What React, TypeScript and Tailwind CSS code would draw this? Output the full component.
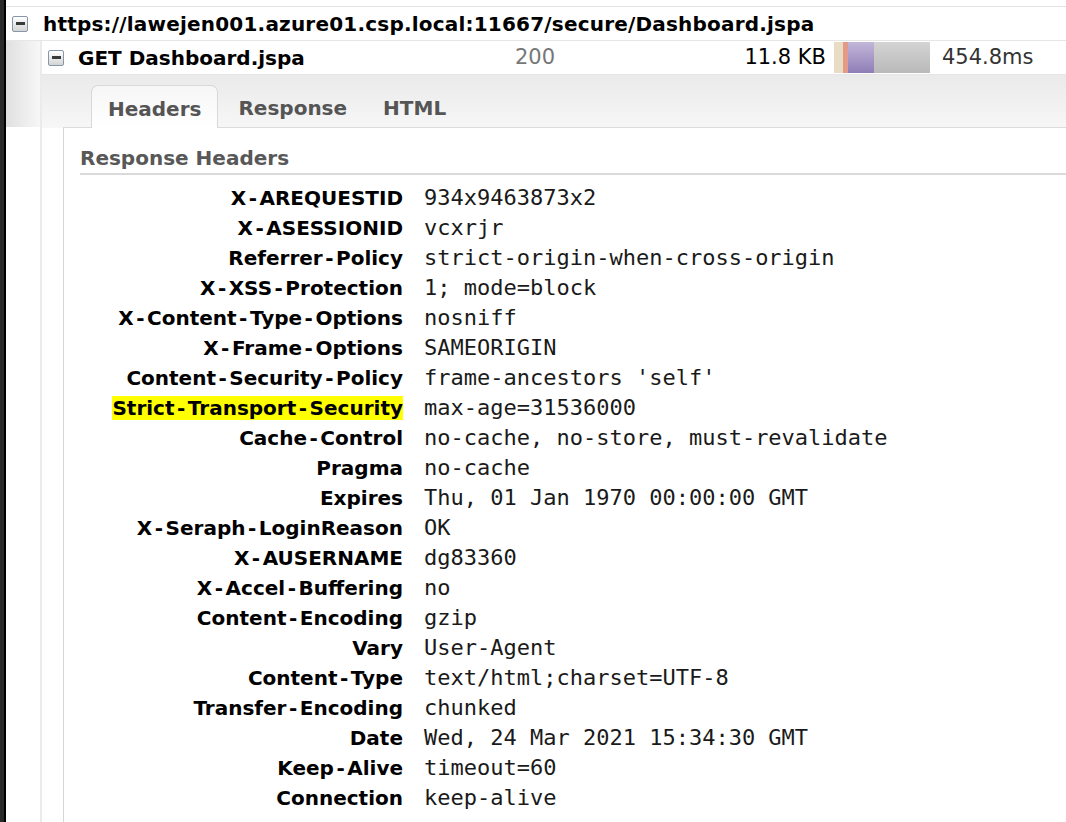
import React from "react";

const headers: [string, string][] = [
  ["X-AREQUESTID", "934x9463873x2"],
  ["X-ASESSIONID", "vcxrjr"],
  ["Referrer-Policy", "strict-origin-when-cross-origin"],
  ["X-XSS-Protection", "1; mode=block"],
  ["X-Content-Type-Options", "nosniff"],
  ["X-Frame-Options", "SAMEORIGIN"],
  ["Content-Security-Policy", "frame-ancestors 'self'"],
  ["Strict-Transport-Security", "max-age=31536000"],
  ["Cache-Control", "no-cache, no-store, must-revalidate"],
  ["Pragma", "no-cache"],
  ["Expires", "Thu, 01 Jan 1970 00:00:00 GMT"],
  ["X-Seraph-LoginReason", "OK"],
  ["X-AUSERNAME", "dg83360"],
  ["X-Accel-Buffering", "no"],
  ["Content-Encoding", "gzip"],
  ["Vary", "User-Agent"],
  ["Content-Type", "text/html;charset=UTF-8"],
  ["Transfer-Encoding", "chunked"],
  ["Date", "Wed, 24 Mar 2021 15:34:30 GMT"],
  ["Keep-Alive", "timeout=60"],
  ["Connection", "keep-alive"],
];

function Toggle() {
  return (
    <span className="flex h-[16px] w-[16px] shrink-0 items-center justify-center rounded-[2px] border border-[#8796a8] bg-linear-to-b from-white to-[#d4d4d4]">
      <span className="h-[3px] w-[9px] bg-[#3a3a3a]" />
    </span>
  );
}

// the original font draws a wider hyphen
function Label({ text }: { text: string }) {
  const parts = text.split("-");
  return (
    <>
      {parts.map((p, i) => (
        <React.Fragment key={i}>
          {i > 0 && <span className="mx-[2.5px]">-</span>}
          {p}
        </React.Fragment>
      ))}
    </>
  );
}

export default function App() {
  return (
    <div className="flex min-h-screen bg-white font-['DejaVu_Sans',sans-serif] text-black">
      {/* dark window edge */}
      <div className="w-[6px] shrink-0 border-r-2 border-black bg-[#2a2a2a]" />

      <div className="flex flex-1 flex-col">
        <div className="h-[7px] border-b border-[#e3e3e3]" />

        {/* request url */}
        <div className="flex h-[34px] items-center border-b border-[#e6e6e6] pl-[6px]">
          <Toggle />
          <span className="ml-[15px] text-[20px] font-bold leading-none tracking-[0.2px]">
            https://lawejen001.azure01.csp.local:11667/secure/Dashboard.jspa
          </span>
        </div>

        <div className="flex flex-1">
          {/* left gutter */}
          <div className="flex w-[36px] shrink-0 flex-col border-r-2 border-[#ebebeb]">
            <div className="h-[86px] bg-linear-to-r from-[#e0e0e0] to-[#f7f7f7]" />
          </div>

          <div className="flex flex-1 flex-col">
            {/* request row */}
            <div className="flex h-[34px] items-center border-b border-[#e6e6e6] pl-[6px]">
              <Toggle />
              <span className="ml-[14px] w-[437px] text-[20px] font-bold leading-none">GET Dashboard.jspa</span>
              <span className="w-[90px] text-[21px] leading-none text-[#777]">200</span>
              <span className="w-[221px] text-right text-[21px] leading-none">11.8 KB</span>
              <div className="ml-[8px] flex h-[31px] w-[96px]">
                <div className="w-[9px] bg-[#e9dcc4]" />
                <div className="w-[5px] bg-[#e39a86]" />
                <div className="w-[26px] bg-linear-to-b from-[#c3b7d9] to-[#8f7db6]" />
                <div className="flex-1 bg-linear-to-b from-[#d4d4d4] to-[#b9b9b9]" />
              </div>
              <span className="ml-[12px] text-[21px] leading-none text-[#333]">454.8ms</span>
            </div>

            {/* tabs */}
            <div className="bg-linear-to-b from-[#eaeaea] to-[#f7f7f7] pt-[10px]">
              <div className="ml-[21px] flex h-[43px] items-end border-b border-[#dcdcdc] pl-[28px]">
                <div className="-mb-px flex h-[43px] items-center rounded-t-[7px] border border-b-0 border-[#d8d8d8] bg-linear-to-b from-[#f6f6f6] to-white px-[16px] pt-[4px] text-[20px] font-bold text-[#555]">
                  Headers
                </div>
                <div className="flex h-[42px] items-center px-[20px] pt-[4px] text-[20px] font-bold text-[#555]">Response</div>
                <div className="flex h-[42px] items-center px-[16px] pt-[4px] text-[20px] font-bold text-[#555]">HTML</div>
              </div>
            </div>

            {/* panel */}
            <div className="ml-[21px] flex-1 border-l border-[#d6d6d6] bg-white pb-[10px]">
              <div className="ml-[16px] border-b-2 border-[#dadada] pb-[3px] pt-[18px] text-[20px] font-bold leading-[24px] text-[#585858]">
                Response Headers
              </div>
              <div className="mt-[8px] grid grid-cols-[339px_1fr] gap-x-[21px] text-[20px] leading-[30px]">
                {headers.map(([k, v]) => (
                  <React.Fragment key={k}>
                    <div className="text-right font-bold">
                      {k === "Strict-Transport-Security" ? (
                        <span className="bg-[#ffff00]">
                          <Label text={k} />
                        </span>
                      ) : (
                        <Label text={k} />
                      )}
                    </div>
                    <div className="font-['DejaVu_Sans_Mono',monospace] text-[22px] text-[#1a1a1a]">{v}</div>
                  </React.Fragment>
                ))}
              </div>
            </div>
          </div>
        </div>
      </div>
    </div>
  );
}
